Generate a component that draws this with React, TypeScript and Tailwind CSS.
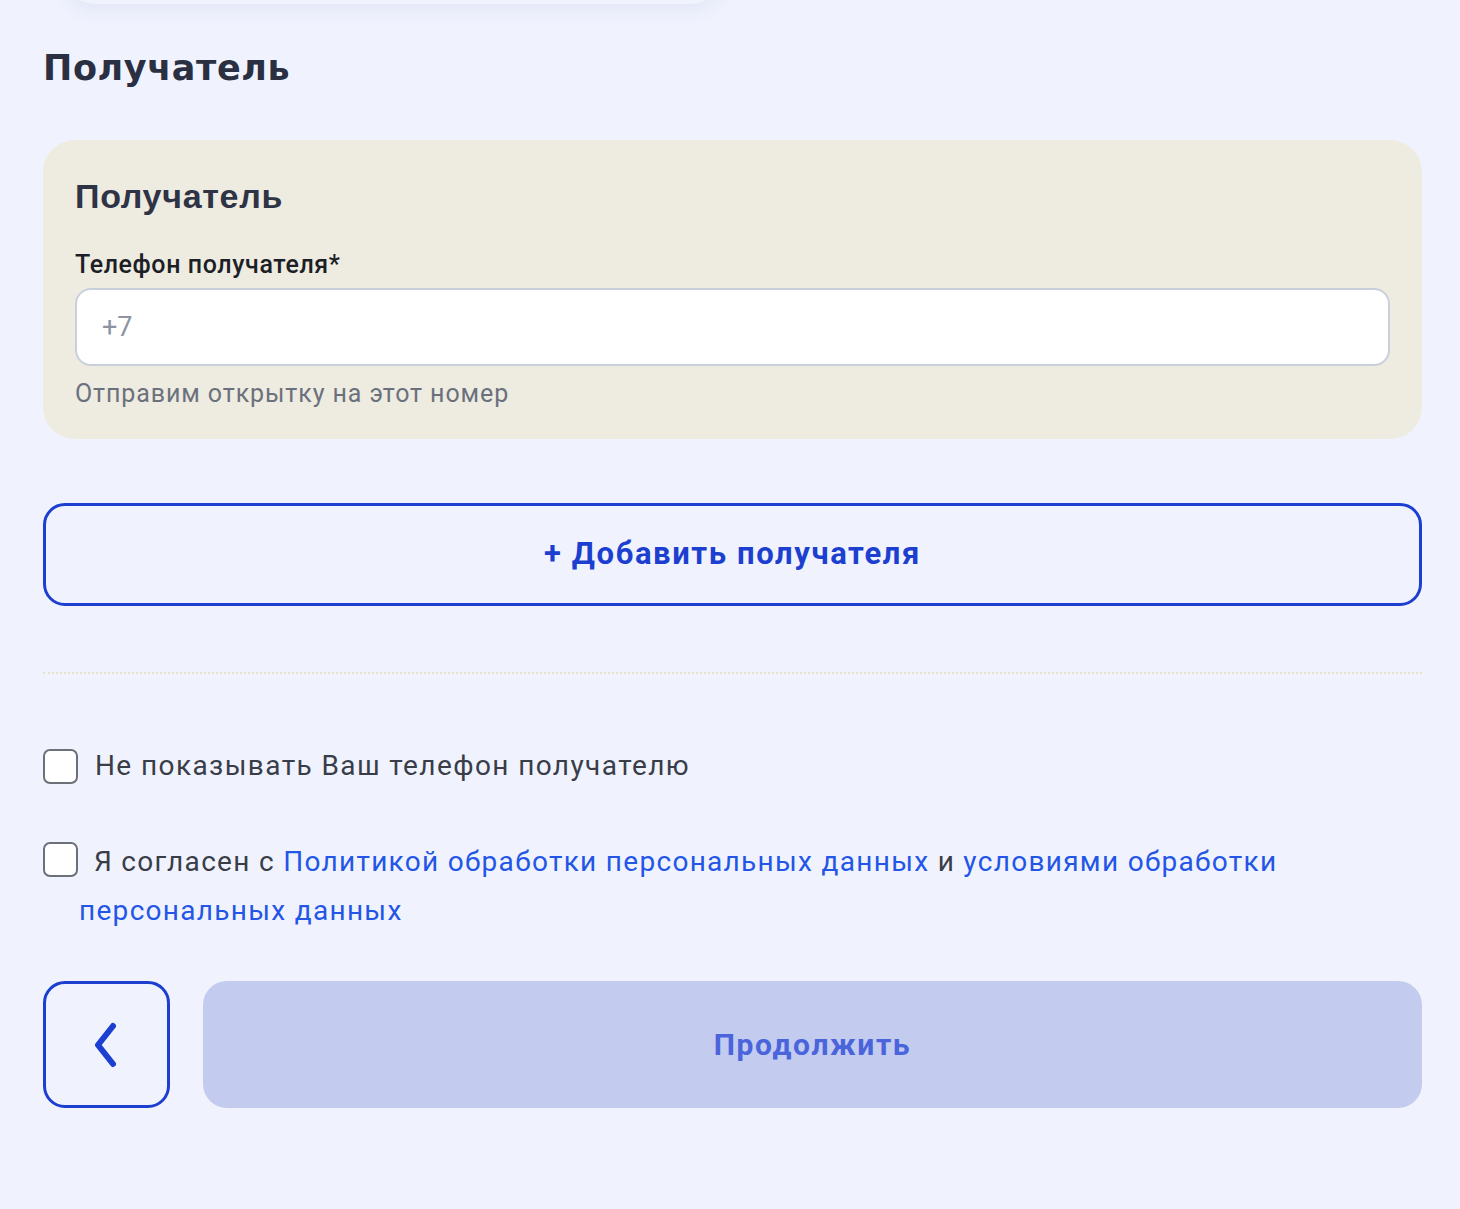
import React from "react";

export default function App() {
  return (
    <div
      className="min-h-[1209px] w-[1460px] bg-[#f0f3fe] pl-[43px] pr-[38px] overflow-hidden"
      style={{ fontFamily: "Roboto, 'Liberation Sans', Arial, sans-serif" }}
    >
      {/* card above, peeking shadow */}
      <div className="ml-[20px] mt-[-60px] h-[64px] w-[660px] rounded-[32px] bg-[#f0f3fe] shadow-[0_6px_18px_rgba(120,130,180,0.12)]" />

      <h2
        className="mt-[-4px] pt-[48px] text-[35px] leading-[40px] font-bold text-[#2a3042] tracking-[0.6px]"
        style={{ fontFamily: "'DejaVu Sans', Verdana, sans-serif" }}
      >
        Получатель
      </h2>

      <div className="mt-[52px] rounded-[32px] bg-[#eeebe1] px-[32px] pt-[36px] pb-[30px]">
        <div
          className="text-[34px] leading-[40px] font-bold tracking-[0.7px] text-[#2e3346]"
          style={{ fontFamily: "'Liberation Sans', Arial, sans-serif" }}
        >
          Получатель
        </div>
        <div className="mt-[34px] text-[25px] leading-[30px] font-medium tracking-[0.6px] text-[#1c1f26]">
          Телефон получателя*
        </div>
        <div className="mt-[8px] flex h-[78px] items-center rounded-[16px] border-2 border-[#c9d0db] bg-white pl-[25px] pr-[32px]">
          <span className="text-[27px] text-[#8c94a1]">+7</span>
        </div>
        <div className="mt-[13px] text-[25px] leading-[30px] tracking-[0.9px] text-[#6b717c]">
          Отправим открытку на этот номер
        </div>
      </div>

      <button className="mt-[64px] flex h-[103px] w-full items-center justify-center rounded-[22px] border-[3px] border-[#1c3fd0] bg-transparent text-[31px] font-bold tracking-[1.6px] text-[#1c3fd0]">
        + Добавить получателя
      </button>

      <div className="mt-[66px] border-t-2 border-dotted border-[#e6e2c8]" />

      <div className="mt-[72px] flex items-center">
        <span className="inline-block h-[35px] w-[35px] shrink-0 rounded-[7px] border-2 border-[#6b7079] bg-white" />
        <span className="ml-[17px] text-[28px] leading-[40px] tracking-[1.4px] text-[#393d48]">
          Не показывать Ваш телефон получателю
        </span>
      </div>

      <p className="mt-[51px] pl-[36px] pr-[100px] text-[28px] leading-[49px] tracking-[1.3px] text-[#393d48]">
        <span className="ml-[-36px] mr-[16px] inline-block h-[35px] w-[35px] align-[-6px] rounded-[7px] border-2 border-[#6b7079] bg-white" />
        <span>Я согласен с </span>
        <a className="text-[#2356e6]">Политикой обработки персональных данных</a>
        <span> и </span>
        <a className="text-[#2356e6]">условиями обработки персональных данных</a>
      </p>

      <div className="mt-[46px] flex gap-[33px]">
        <button className="flex h-[127px] w-[127px] shrink-0 items-center justify-center rounded-[22px] border-[3px] border-[#1c3fd0] bg-transparent">
          <svg width="30" height="46" viewBox="0 0 30 46" fill="none" className="ml-[-4px]">
            <path d="M23 4 L8 23 L23 42" stroke="#1c3fd0" strokeWidth="6" strokeLinecap="round" strokeLinejoin="round" />
          </svg>
        </button>
        <button className="flex h-[127px] flex-1 items-center justify-center rounded-[24px] bg-[#c3cbef] text-[30px] font-bold tracking-[1.6px] text-[#4a64dc]">
          Продолжить
        </button>
      </div>
    </div>
  );
}
